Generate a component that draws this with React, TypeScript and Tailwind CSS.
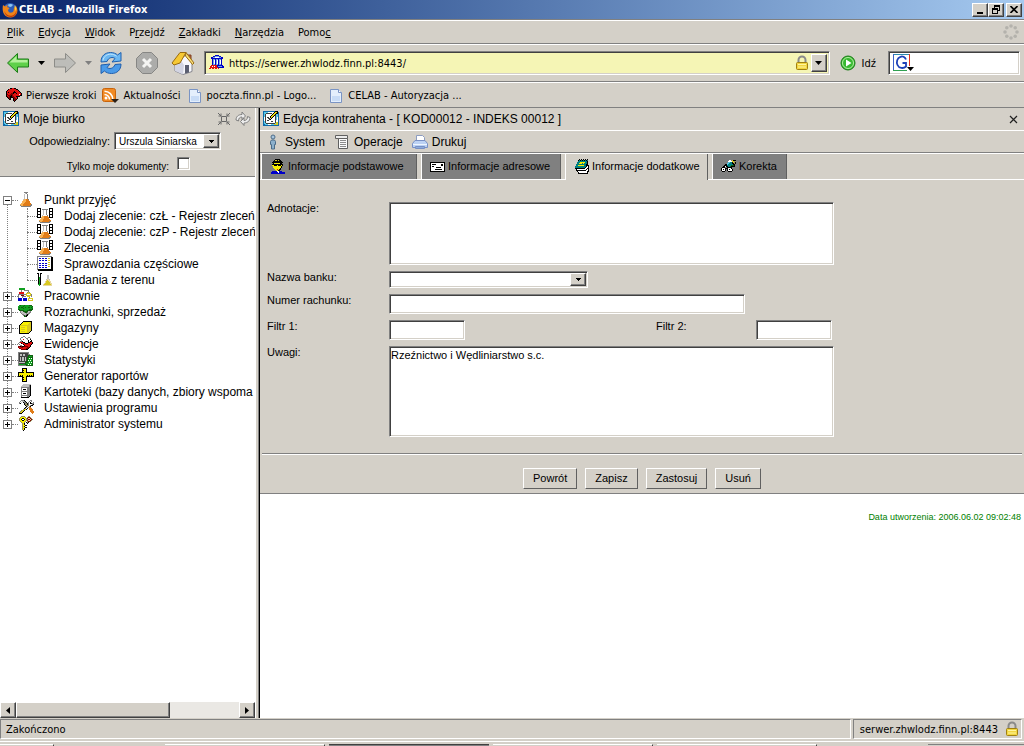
import type { ReactNode } from "react"

const sunken =
  "border border-t-[#808080] border-l-[#808080] border-r-white border-b-white shadow-[inset_1px_1px_0_#404040,inset_-1px_-1px_0_#d4d0c8]"
const raised =
  "border border-t-white border-l-white border-r-[#404040] border-b-[#404040] shadow-[inset_-1px_-1px_0_#808080] bg-[#d4d0c8]"
const bar = "border-t border-t-[#808080] shadow-[inset_0_1px_0_#ffffff]"

const palette: Record<string, string> = {
  k: "#000000",
  w: "#ffffff",
  g: "#808080",
  l: "#c0c0c0",
  d: "#404040",
  y: "#f8f000",
  Y: "#d8c820",
  o: "#e07c18",
  O: "#f8b050",
  r: "#e01010",
  R: "#800000",
  b: "#0000c8",
  B: "#70a8e0",
  c: "#58c8e8",
  C: "#1068a8",
  t: "#008080",
  n: "#10a020",
  N: "#106010",
  s: "#e8d8a0",
  m: "#989060",
}

// 16px icons drawn row by row, one letter per pixel
const icons: Record<string, string[]> = {
  flask: [
    "......gggg......",
    ".......lg.......",
    "......lwwg......",
    "......lwwg......",
    "......lwwg......",
    "......lwwg......",
    "......lwwg......",
    ".....lOOoog.....",
    ".....OOOooo.....",
    "....OOOOoooo....",
    "....OOOooooo....",
    "...OOOooooooo...",
    "..OOOoooooooog..",
    "..gOOooooooogg..",
    "...gggggggggg...",
    "................",
  ],
  flasks: [
    "kkkk........kkkk",
    "kwwk.gggggg.kwwk",
    "kwwk..lwwg..kwwk",
    "kkkk..lwwg..kkkk",
    "kwwk..lwwg..kwwk",
    "kwwk..lwwg..kwwk",
    "kkkk..lwwg..kkkk",
    "kwwk.lwwwwg.kwwk",
    "kwwk.OOoooo.kwwk",
    "kkkkOOOoooookkkk",
    "....OOOooooo....",
    "...OOOooooooo...",
    "..OOOOoooooooo..",
    "..gOOooooooogg..",
    "...gggggggggg...",
    "................",
  ],
  report: [
    "ggggggggggggggg.",
    "gwwwwwwwwwwwwwkk",
    "gwbbwbbwbbwYYwkk",
    "gwwwwwwwwwwwwwkk",
    "gwbbwbbwbbwYYwkk",
    "gwwwwwwwwwwwwwkk",
    "gwwwwwwwwwwYYwkk",
    "gwbbwbbwbbwwwwkk",
    "gwwwwwwwwwwYYwkk",
    "gwbbwbbwbbwwwwkk",
    "gwwwwwwwwwwYYwkk",
    "gwbbwbbwbbwwwwkk",
    "gwwwwwwwwwwwwwkk",
    "gkkkkkkkkkkkkkkk",
    ".kkkkkkkkkkkkkkk",
    "................",
  ],
  tube: [
    "................",
    "kk.kk...........",
    ".kwk............",
    ".kwk......ll....",
    ".kwk......ll....",
    ".knk......ll....",
    ".knk......ll....",
    ".knk.....lssl...",
    ".knk.....sYss...",
    ".knk....sYYYss..",
    ".knk....sYYYYs..",
    ".knk...sYYYYYss.",
    ".nnk..sYYYYYYYs.",
    "..n...sssssssss.",
    "................",
    "................",
  ],
  labs: [
    ".nnnnnn.........",
    ".nnnnnn.........",
    "...g..ggggg.....",
    "...g......g.....",
    ".rrrrr...gYg....",
    ".rrrrr..YYYYY...",
    "ggggggggYwwwYg..",
    "g..RRR..YYYYYg..",
    "g...gggg.YYY.g..",
    "g...g......g....",
    "bbbb.bbbb.YYYYY.",
    "bbbb.bbbb.YwwwY.",
    "bbbb.bbbb.YYYYY.",
    "................",
    "................",
    "................",
  ],
  money: [
    "................",
    ".nNnnnNnnnnNNN..",
    "nnnnnNnnnnnnnnN.",
    "nNnNNnnNnnNNnNn.",
    "nnnnnNnnnnnnnnN.",
    "NNnnnnnnnnnNNNN.",
    ".NNNNNnnnNNNNN..",
    "..gllNNNNNllg...",
    "..glllgNNglgg...",
    "...gllllglgg....",
    "....ggllgkg.....",
    ".....gNgkk......",
    "......NNk.......",
    "................",
    "................",
    "................",
  ],
  box: [
    "................",
    ".....kkkkkkkkk..",
    "....kyyyyyyyYk..",
    "...kyyyyyyyYYk..",
    "..kyyyyyyyYYYk..",
    ".kYYYYYYYYYYYk..",
    ".kyyyyyyyYYYYk..",
    ".kyYYYYyyYYYYk..",
    ".kyyyyyyyYYYYk..",
    ".kyYYYYyyYYYYk..",
    ".kyyyyyyyYYYYk..",
    ".kyYYYYyyYYYk...",
    ".kyyyyyyyYYk....",
    ".kkkkkkkkkk.....",
    "................",
    "................",
  ],
  records: [
    ".....gg.........",
    "...ggwwg..gg....",
    "..gwwwwwggwwg...",
    "..gwwrwwwgwwk...",
    "...gwwwwwwkwwk..",
    "..ggkwwwwwkwkk..",
    ".grrrkkwwwkkrrk.",
    "gwwkrrrkkkrrrrk.",
    ".gwwwkrrrrrrrk..",
    "..ggwwkrrrrrk...",
    "RRkRkkRRRRrrk...",
    "RrrRRrrrrRRk....",
    ".RRrrrrrRRk.....",
    "...RRRRRkk......",
    "................",
    "................",
  ],
  stats: [
    "ggggggggggg.....",
    "gdddddddddg.....",
    "gdlldlldddgg....",
    "gdlldlldddNNNNN.",
    "gdddddddddNnnnN.",
    "gdldlldldNNNNNN.",
    "gdldlldldNnwnwN.",
    "gdldlldldNnnnnN.",
    "gdldlldldNwnwnN.",
    "gdddddddNNnnnnN.",
    "gllllllNNNnwnwN.",
    "gddddddNnnnnnnN.",
    "gnnnnnnNNnwnwnN.",
    "ggggggggNNNNNNN.",
    "................",
    "................",
  ],
  ruler: [
    "....kkkkk.......",
    "....kyyyk.......",
    "....kkyyk.......",
    "....kyyyk.......",
    "kkkkkkyykkkkkkkk",
    "kyyyyyyyyyyyyyyk",
    "kyyyyyyyyyyyyyyk",
    "kykykyyyykykykyk",
    "kkkkkyyykkkkkkkk",
    "....kkyyk.......",
    "....kyyyk.......",
    "....kkyyk.......",
    "....kyyyk.......",
    "....kkkkk.......",
    "................",
    "................",
  ],
  cabinet: [
    ".....llllllll...",
    "....lllllllgk...",
    "...llllllllgk...",
    "...gggggggggk...",
    "...gwwwwwgggk...",
    "...gwkkkwgggk...",
    "...gwwwwwgggk...",
    "...gggggggggk...",
    "...gwwwwwgggk...",
    "...gwkkkwgggk...",
    "...gwwwwwgggk...",
    "...gggggggggk...",
    "...gwwwwwggk....",
    "...kkkkkkkk.....",
    "................",
    "................",
  ],
  tools: [
    "...gggk.....gg..",
    "..gwllgk...gwg..",
    ".gwl.kggk.gwk..g",
    ".gk...kgmkgwkkgg",
    "......kmmkgwwwgk",
    ".......kmmgwgkk.",
    "........kgwmk...",
    ".......kgwgoo...",
    "......kgwk.ooo..",
    ".....gYYk..oooo.",
    "...gYYk.....ooo.",
    "..gYYk......oooo",
    ".gYYk........ooo",
    ".kkk..........o.",
    "................",
    "................",
  ],
  keys: [
    "...mmmm...mm....",
    "..myyyym.mRRm...",
    ".myykkyymRssRm..",
    ".myk..kymmRRsRm.",
    ".myykkyymRssRm..",
    "..myyyym.mRRm...",
    "...myym.kmk.....",
    "....mYk..k......",
    "....myk.........",
    "....myykk.......",
    "....mYk.........",
    "....myykk.......",
    "....mYk.........",
    "....myk.........",
    ".....k..........",
    "................",
  ],
  edit: [
    "CCCCCCCCCCCCkkk.",
    "CccccwwwwwwkyYkC",
    "CccddddddwkyYkkC",
    "CcdwwwwwwkyYkccC",
    "CcdwwwwwkyYkdccC",
    "CcdwwwwkyYkwdccC",
    "CwdwddwkYkwwdcwC",
    "CwdwwddskwwwdcwC",
    "CwdwwwdkwwwwdcwC",
    "CwdwddwwwwwwdwwC",
    "CcdwwwwwddwwdwwC",
    "CcdwwwwwwwwwdYYC",
    "CccdddddddddcYYC",
    "CCcccwwwcccYYYYC",
    "CCCCCCCCCCCCCCCC",
    "................",
  ],
  spy: [
    ".....kkkkk......",
    "....kYYkYkk.....",
    "...kkkkkkkkk....",
    "..kkkkkkkkkkk...",
    "...kyyyyyykk....",
    "..kkkkkkkkkkk...",
    "..yykkkykkkyk...",
    "...yyyyyyyyk....",
    "...yyyyyyyyk....",
    "....yyyyyyk.....",
    ".....yyrykk.....",
    "......yykk......",
    "..bbbbbwwbbb....",
    ".bbbbbbbwbbbbbb.",
    ".bbbbbbbbbbbbbb.",
    "................",
  ],
  card: [
    "................",
    "................",
    "................",
    "kkkkkkkkkkkkkkk.",
    "kwwwwwwwwwwwwwk.",
    "kwkkkkwwwwwkkwk.",
    "kwwwwwwwwwwkkwk.",
    "kwkkwwwwwwwwwwk.",
    "kwwwwwkkkkkwwwk.",
    "kwwwwwwwwwwwwwk.",
    "kwwwwkkkkkkkwwk.",
    "kwwwwwwwwwwwwwk.",
    "kkkkkkkkkkkkkkk.",
    "................",
    "................",
    "................",
  ],
  notebook: [
    ".....k.k.k.k.k..",
    "....ktktktktkt..",
    "....tttttttttk..",
    "...tttyyyyyttk..",
    "...ttyyytytttk..",
    "..ttttttttttkk..",
    "..ttyyyyyyttkkk.",
    ".tttttttttttkwk.",
    ".ttttttttttkwwk.",
    ".kkkkkkkkkkwwkk.",
    "..kwwwwwwwwwkwk.",
    "..kkkkkkkkkkwwk.",
    "...kwwwwwwwwwkk.",
    "....kwwwwwwwwk..",
    "....kkkkkkkkkk..",
    "................",
  ],
  correction: [
    "................",
    "........ww.Ykkk.",
    ".......wwwwYYmm.",
    ".......ccttkYmk.",
    "......cctttkkmk.",
    "....kkctttttkk..",
    "...kkkttttNNNk..",
    "..kkwkkttNkkkk..",
    ".kkk..kkkkk.....",
    "kwwwkkkwwwk.....",
    "kwkwk.kwkwwk....",
    "kwwwk.kwwwwk....",
    ".kkk...kkkk.....",
    "................",
    "................",
    "................",
  ],
  museum: [
    "......bbbb......",
    "....bbBBBBbb....",
    "..bbBBwwwwBBbb..",
    "..bbbbbbbbbbbb..",
    "...bBBbBBbBBb...",
    "...bBwbBwbBwb...",
    "...bBwbBwbBwb...",
    "...bBwbBwbBwb...",
    "...bBwbBwbBwb...",
    "...bBBbBBbBBb...",
    "..rrrrrrbbbbbb..",
    ".rrwrwrrbBBBBbb.",
    ".rrrrrrrrbbbbbb.",
    "rr.rr.rr.r......",
    "................",
    "................",
  ],
  dino: [
    "....kkrrkk......",
    "..krrrrrrrkk....",
    ".krrrrrrrrrrk...",
    "krrrrrrrkrrrrk..",
    "krkrrrrkkkrrrrk.",
    "krrrrRRkrrkrrrrk",
    "kRrrRRRrrrrrrwrk",
    "krRRRkRrrrrrrrkk",
    "kRrRkkRRrrkkkk..",
    ".kRRkkkRRrrk....",
    "..kRk..kRRrk....",
    "...kk..kRRk.....",
    ".......kRk......",
    "........k.......",
    "................",
    "................",
  ],
}

const PixelIcon = ({ name }: { name: string }) => (
  <svg viewBox="0 0 16 16" className="size-4 shrink-0" shapeRendering="crispEdges" aria-hidden="true">
    {icons[name].map((row, y) =>
      row.split("").map((ch, x) =>
        ch === "." ? null : <rect key={`${x}-${y}`} x={x} y={y} width="1" height="1" fill={palette[ch]} />
      )
    )}
  </svg>
)

const Caret = ({ color = "#000000" }: { color?: string }) => (
  <svg viewBox="0 0 7 4" className="h-1 w-[7px] shrink-0" aria-hidden="true">
    <path d="M0 0h7L3.500 4z" fill={color} />
  </svg>
)

const PageIcon = () => (
  <svg viewBox="0 0 16 16" className="size-4 shrink-0" aria-hidden="true">
    <path d="M2.500 1.500h8l3 3v10h-11z" fill="#e4effc" stroke="#7a94c4" />
    <path d="M10.500 1.500v3h3" fill="#ffffff" stroke="#7a94c4" />
    <path d="M4 8h8v5H4z" fill="#c8dcf6" />
  </svg>
)

const LockIcon = () => (
  <svg viewBox="0 0 14 16" className="h-4 w-3.5 shrink-0" aria-hidden="true">
    <path d="M3.500 8V5a3.500 3.500 0 0 1 7 0v3" fill="none" stroke="#8a8a8a" strokeWidth="2" />
    <rect x="1.500" y="7.500" width="11" height="7" rx="1" fill="#f2d640" stroke="#a08010" />
    <path d="M3 9.500h8M3 12h8" stroke="#fff6a0" />
  </svg>
)

const ArrowIcon = ({ forward = false }: { forward?: boolean }) => (
  <svg viewBox="0 0 24 22" className="h-[22px] w-6 shrink-0" aria-hidden="true">
    {forward ? (
      <path d="M22.500 11L12.500 1.500V7H1.500v8h11v5.500z" fill="#bdbdb9" stroke="#8c8c88" />
    ) : (
      <>
        <path d="M1.500 11L11.500 1.500V7h11v8h-11v5.500z" fill="#5fd04a" stroke="#1d7a18" />
        <path d="M3.500 10.500L10.500 4v4h11v2.500z" fill="#b4f09c" />
      </>
    )}
  </svg>
)

const ReloadIcon = () => (
  <svg viewBox="0 0 24 24" className="size-6 shrink-0" aria-hidden="true">
    <path d="M2 11C2 5 6 1.500 11.500 1.500c3 0 5.500 1 7 2.500L22 1.500V10l-9 1 3-3.500C14 5.800 9.500 6 8 10.500z" fill="#6cb8f2" stroke="#1f5fae" />
    <path d="M22 13c0 6-4 9.500-9.500 9.500-3 0-5.500-1-7-2.500L2 22.500V14l9-1-3 3.500c2 1.700 6.500 1.500 8-3z" fill="#4a9ae8" stroke="#1f5fae" />
    <path d="M4 9.500C4.500 5.500 8 3.200 11.500 3.200c2.500 0 4.500.8 6 2" fill="none" stroke="#c6e6fc" />
  </svg>
)

const StopIcon = () => (
  <svg viewBox="0 0 24 24" className="size-6 shrink-0" aria-hidden="true">
    <path d="M7.500 1.500h9l6 6v9l-6 6h-9l-6-6v-9z" fill="#acacaa" stroke="#868684" />
    <path d="M8 8l8 8M16 8l-8 8" stroke="#f4f4f2" strokeWidth="3" />
  </svg>
)

const HomeIcon = () => (
  <svg viewBox="0 0 24 24" className="size-6 shrink-0" aria-hidden="true">
    <path d="M17 4h3v6h-3z" fill="#b06040" stroke="#804020" />
    <path d="M4 12v8l8 3.500 9-3V12l-6-8z" fill="#f8f8fc" stroke="#84848c" />
    <path d="M4 12l5-4 4 6-1 9.500L4 20z" fill="#d2d4e2" />
    <path d="M14 14h4v7.500l-4 1z" fill="#5a5e70" />
    <path d="M1 12L9 1.500h6L9 12l-6 2z" fill="#f6c834" stroke="#9a6c10" />
    <path d="M15 1.500L23 12l-1.500 1.500L14.500 5z" fill="#fbe07a" stroke="#9a6c10" />
  </svg>
)

const RssIcon = () => (
  <svg viewBox="0 0 17 16" className="h-4 w-[17px] shrink-0" aria-hidden="true">
    <rect x="0.500" y="0.500" width="13" height="13" rx="2" fill="#f08a24" stroke="#c8640c" />
    <circle cx="4" cy="10" r="1.500" fill="#ffffff" />
    <path d="M2.500 6.500a5 5 0 0 1 5 5M2.500 3.200a8.300 8.300 0 0 1 8.300 8.300" fill="none" stroke="#ffffff" strokeWidth="1.600" />
    <path d="M9 11h8l-4 4z" fill="#2a2018" />
  </svg>
)

const FirefoxIcon = () => (
  <svg viewBox="0 0 16 16" className="size-4 shrink-0" aria-hidden="true">
    <circle cx="8" cy="8" r="7" fill="#2c5cb8" />
    <path d="M6 2.500c2-1 4-.5 5 .5L9 5 6.500 4.500z" fill="#8cc4f0" />
    <path d="M1 3l2 1.500c1-1 2-1.500 3-1.500L5 5l2.500 1L6 8c0 2 2 3 3.500 2.500 1.800-.5 2.500-2 2.300-4L14 4c2.500 4 1.500 8-1.500 10.200C9 16.500 4 15.500 2 12 .3 9 .5 6 1 3z" fill="#f08418" />
    <path d="M2.500 9c1 4 5 5.500 8 4.500 2-.7 3.500-2.500 3.800-5 .7 4-2.300 6.500-5.500 6.500C5 15 2.500 12 2.500 9z" fill="#c43c08" />
    <path d="M13 3l1.500 4-1 2-1-4z" fill="#fcd448" />
  </svg>
)

const GoIcon = () => (
  <svg viewBox="0 0 16 16" className="size-4 shrink-0" aria-hidden="true">
    <circle cx="8" cy="8" r="7" fill="#38b830" stroke="#1c7c18" />
    <circle cx="8" cy="8" r="5.500" fill="none" stroke="#b4f0a4" />
    <path d="M6 4.500v7L11.500 8z" fill="#ffffff" />
  </svg>
)

const ThrobberIcon = () => (
  <svg viewBox="0 0 16 16" className="size-4 shrink-0" fill="#b4b2ac" aria-hidden="true">
    <circle cx="8" cy="2" r="1.800" />
    <circle cx="12.200" cy="3.800" r="1.800" />
    <circle cx="14" cy="8" r="1.800" />
    <circle cx="12.200" cy="12.200" r="1.800" />
    <circle cx="8" cy="14" r="1.800" />
    <circle cx="3.800" cy="12.200" r="1.800" />
    <circle cx="2" cy="8" r="1.800" />
    <circle cx="3.800" cy="3.800" r="1.800" />
  </svg>
)

const PersonIcon = () => (
  <svg viewBox="0 0 16 16" className="size-4 shrink-0" aria-hidden="true">
    <circle cx="8" cy="3" r="2" fill="#a8c4dc" stroke="#4c6c88" />
    <path d="M5.500 7.500l1-1.500h3l1 1.500v3h-1v4.500h-3v-4.500h-1z" fill="#8cb0cc" stroke="#4c6c88" />
  </svg>
)

const ScrollIcon = () => (
  <svg viewBox="0 0 16 16" className="size-4 shrink-0" aria-hidden="true">
    <path d="M1.500 1.500h12v3h-12z" fill="#ececec" stroke="#606060" />
    <path d="M4.500 4.500h9v10h-9z" fill="#fbfbfb" stroke="#606060" />
    <path d="M6 6.500h6M6 8.500h6M6 10.500h6M6 12.500h6" stroke="#8c8c8c" />
  </svg>
)

const PrinterIcon = () => (
  <svg viewBox="0 0 16 16" className="size-4 shrink-0" aria-hidden="true">
    <path d="M4.500 8V1.500h6l2 2V8" fill="#ffffff" stroke="#8c9cc0" />
    <path d="M3 6.500h10l2.500 3v4h-15v-4z" fill="#bcd2f4" stroke="#7890c4" />
    <path d="M1 10.500h14" stroke="#eef6ff" />
    <path d="M3.500 12.500h9v2h-9z" fill="#8cacdc" stroke="#7890c4" />
  </svg>
)

const ShrinkIcon = () => (
  <svg viewBox="0 0 14 14" className="size-3.5 shrink-0" fill="none" stroke="#686868" aria-hidden="true">
    <path d="M4.500 4.500h5v5h-5zM1 1l3 3M13 1l-3 3M1 13l3-3M13 13l-3-3" />
    <path d="M1.500 4h2.500V1.500M12.500 4H10V1.500M1.500 10h2.500v2.500M12.500 10H10v2.500" />
  </svg>
)

const RefreshIcon = () => (
  <svg viewBox="0 0 16 16" className="size-4 shrink-0" fill="#ececec" stroke="#808080" aria-hidden="true">
    <path d="M1 9c0-3.500 2.500-5.500 6-5.500V1l3.500 4L7 8.500V6C5 6 3.500 7 3.500 10z" />
    <path d="M15 6.500c0 3.500-2.500 5.500-6 5.500v2.500l-3.500-4L9 7v2.500c2 0 3.500-1 3.500-4z" />
  </svg>
)

const SelectArrow = () => (
  <span className={`pointer-events-none absolute inset-y-0.5 right-0.5 flex w-4 items-center justify-center ${raised}`}>
    <svg viewBox="0 0 5 3" className="h-[3px] w-[5px]" shapeRendering="crispEdges" aria-hidden="true">
      <path d="M0 0h5v1H0zM1 1h3v1H1zM2 2h1v1H2z" />
    </svg>
  </span>
)

const menu: ReactNode[] = [
  <><u>P</u>lik</>,
  <><u>E</u>dycja</>,
  <><u>W</u>idok</>,
  <>P<u>r</u>zejdź</>,
  <><u>Z</u>akładki</>,
  <><u>N</u>arzędzia</>,
  <>Pomo<u>c</u></>,
]

const samples = [
  { icon: "flasks", label: "Dodaj zlecenie: czŁ - Rejestr zleceń" },
  { icon: "flasks", label: "Dodaj zlecenie: czP - Rejestr zleceń" },
  { icon: "flasks", label: "Zlecenia" },
  { icon: "report", label: "Sprawozdania częściowe" },
  { icon: "tube", label: "Badania z terenu" },
]

const sections = [
  { icon: "flask", label: "Punkt przyjęć", children: samples },
  { icon: "labs", label: "Pracownie" },
  { icon: "money", label: "Rozrachunki, sprzedaż" },
  { icon: "box", label: "Magazyny" },
  { icon: "records", label: "Ewidencje" },
  { icon: "stats", label: "Statystyki" },
  { icon: "ruler", label: "Generator raportów" },
  { icon: "cabinet", label: "Kartoteki (bazy danych, zbiory wspoma" },
  { icon: "tools", label: "Ustawienia programu" },
  { icon: "keys", label: "Administrator systemu" },
]

const tabs = [
  { icon: "spy", label: "Informacje podstawowe", width: "w-[156px]" },
  { icon: "card", label: "Informacje adresowe", width: "w-[140px]" },
  { icon: "notebook", label: "Informacje dodatkowe", width: "w-[143px]", active: true },
  { icon: "correction", label: "Korekta", width: "w-[75px]" },
]

const BrowserChrome = () => (
  <header className="text-[11px]">
    <div className="flex h-[19px] items-center justify-between bg-linear-to-r from-[#0a246a] to-[#a6caf0] pr-0.5 pl-0.5">
      <div className="flex items-center gap-px font-bold text-white">
        <FirefoxIcon />
        <span className="pt-0.5">CELAB - Mozilla Firefox</span>
      </div>
      <div className="flex">
        <button aria-label="Minimalizuj" className={`flex h-3.5 w-4 items-end justify-center pb-0.5 ${raised}`}>
          <span className="h-0.5 w-1.5 bg-black"></span>
        </button>
        <button aria-label="Przywróć" className={`mr-0.5 flex h-3.5 w-4 items-center justify-center ${raised}`}>
          <svg viewBox="0 0 9 9" className="size-[9px]" shapeRendering="crispEdges" aria-hidden="true">
            <path d="M2 0h6v6H6V5h1V2H3v1H2zM0 3h6v6H0zM1 5v3h4V5z" fillRule="evenodd" />
          </svg>
        </button>
        <button aria-label="Zamknij" className={`flex h-3.5 w-4 items-center justify-center ${raised}`}>
          <svg viewBox="0 0 8 7" className="h-[7px] w-2" aria-hidden="true">
            <path d="M0.500 0l7 7M7.500 0l-7 7" stroke="#000000" strokeWidth="1.600" />
          </svg>
        </button>
      </div>
    </div>

    <nav className={`flex h-6 items-center gap-3.5 pr-[5px] pl-[7px] ${bar}`}>
      {menu.map((item, i) => (
        <button key={i} className="pt-[3px]">{item}</button>
      ))}
      <span className="ml-auto"><ThrobberIcon /></span>
    </nav>

    <div className={`flex h-[38px] items-center pr-1 pl-1.5 ${bar}`}>
      <button aria-label="Wstecz" className="flex items-center gap-2">
        <ArrowIcon />
        <Caret />
      </button>
      <button aria-label="Dalej" className="ml-2 flex items-center gap-2">
        <ArrowIcon forward />
        <Caret color="#808080" />
      </button>
      <button aria-label="Odśwież" className="ml-[7px]"><ReloadIcon /></button>
      <button aria-label="Zatrzymaj" className="ml-3"><StopIcon /></button>
      <button aria-label="Strona startowa" className="ml-3"><HomeIcon /></button>

      <div className={`ml-[9px] flex h-6 flex-1 items-center bg-[#f5f5b5] p-0.5 pl-1 ${sunken}`}>
        <PixelIcon name="museum" />
        <input aria-label="Adres" defaultValue="https://serwer.zhwlodz.finn.pl:8443/" className="min-w-0 flex-1 bg-transparent px-1 pt-[3px] outline-none" />
        <LockIcon />
        <button aria-label="Historia adresów" className={`ml-0.5 flex h-full w-4 items-center justify-center ${raised}`}>
          <Caret />
        </button>
      </div>
      <button className="mr-3 ml-2.5 flex items-center gap-1.5">
        <GoIcon />
        <span className="pt-[3px]">Idź</span>
      </button>
      <div className={`flex h-6 w-[132px] items-center bg-white pl-1 ${sunken}`}>
        <svg viewBox="0 0 22 18" className="h-[18px] w-[22px] shrink-0" aria-hidden="true">
          <path d="M0.500 0.500h16" stroke="#2c8cb0" />
          <path d="M0.500 0v16" stroke="#3c60c8" />
          <path d="M0 16.500h14" stroke="#30a050" />
          <path d="M16.500 0v12" stroke="#e03020" />
          <path d="M13 5.500C12 3 9.500 2 7.500 2.800 4 4 3.200 8 4.500 11c1.500 3.500 6 3.800 8.500 1.500V9H9.500" fill="none" stroke="#1c40b8" strokeWidth="1.800" />
          <path d="M14 13h7l-3.500 4z" />
        </svg>
        <input aria-label="Szukaj" className="min-w-0 flex-1 bg-transparent outline-none" />
      </div>
    </div>

    <div className={`flex h-[26px] items-center pt-0.5 pl-1.5 ${bar}`}>
      <a href="#kroki" className="flex items-center gap-1"><PixelIcon name="dino" /><span className="pt-0.5">Pierwsze kroki</span></a>
      <a href="#rss" className="ml-1.5 flex items-center gap-1"><RssIcon /><span className="pt-0.5">Aktualności</span></a>
      <a href="#poczta" className="ml-1.5 flex items-center gap-1"><PageIcon /><span className="pt-0.5">poczta.finn.pl - Logo...</span></a>
      <a href="#celab" className="ml-3 flex items-center gap-1"><PageIcon /><span className="pt-0.5">CELAB - Autoryzacja ...</span></a>
    </div>
  </header>
)

const Expander = ({ open }: { open: boolean }) => (
  <button aria-label={open ? "Zwiń" : "Rozwiń"} className="relative size-[9px] shrink-0 border border-[#808080] bg-white">
    <span className="absolute top-[3px] left-px h-px w-[5px] bg-black"></span>
    {!open && <span className="absolute top-px left-[3px] h-[5px] w-px bg-black"></span>}
  </button>
)

const Sidebar = () => (
  <aside className="flex w-[255px] shrink-0 flex-col overflow-hidden bg-white">
    <div className="h-[69px] border-b border-[#808080] bg-[#d4d0c8]">
      <div className="flex h-[22px] items-center gap-1 pr-1 pl-[3px]">
        <PixelIcon name="edit" />
        <h2 className="flex-1 text-[12px]">Moje biurko</h2>
        <button aria-label="Zwiń drzewo"><ShrinkIcon /></button>
        <button aria-label="Odśwież drzewo"><RefreshIcon /></button>
      </div>
      <div className="flex h-[22px] items-center justify-end gap-1 pr-[34px]">
        <label htmlFor="owner" className="text-[11px]">Odpowiedzialny:</label>
        <div className="relative">
          <select id="owner" className={`block h-[18px] w-[107px] appearance-none bg-white pl-1 text-[10px] ${sunken}`}>
            <option>Urszula Siniarska</option>
          </select>
          <SelectArrow />
        </div>
      </div>
      <div className="flex h-[22px] items-center justify-end gap-2 pr-[65px]">
        <label htmlFor="mine" className="pt-1.5 text-[10px]">Tylko moje dokumenty:</label>
        <input id="mine" type="checkbox" className={`size-[13px] appearance-none bg-white ${sunken}`} />
      </div>
    </div>

    <div className="flex-1 overflow-hidden pt-[15px] text-[12px] leading-4 whitespace-nowrap">
      <ul className="relative">
        <li aria-hidden="true" className="absolute top-2 bottom-2 left-[7px] border-l border-dotted border-[#808080]"></li>
        {sections.map((section) => (
          <li key={section.label} className="relative">
            <div className="flex h-4 items-center pl-[3px]">
              <Expander open={Boolean(section.children)} />
              <span className="w-1.5 border-t border-dotted border-[#808080]"></span>
              <PixelIcon name={section.icon} />
              <span className="pl-2.5">{section.label}</span>
            </div>
            {section.children && (
              <ul className="relative ml-[27px]">
                <li aria-hidden="true" className="absolute top-0 bottom-2 left-0 border-l border-dotted border-[#808080]"></li>
                {section.children.map((child) => (
                  <li key={child.label} className="flex h-4 items-center">
                    <span className="w-2.5 shrink-0 border-t border-dotted border-[#808080]"></span>
                    <PixelIcon name={child.icon} />
                    <span className="pl-[11px]">{child.label}</span>
                  </li>
                ))}
              </ul>
            )}
          </li>
        ))}
      </ul>
    </div>

    <div className="flex h-4 bg-[#eae8e4]">
      <button aria-label="W lewo" className={`flex w-4 items-center justify-center ${raised}`}>
        <svg viewBox="0 0 4 7" className="h-[7px] w-1" aria-hidden="true"><path d="M4 0v7L0 3.500z" /></svg>
      </button>
      <div className={`w-[154px] ${raised}`}></div>
      <button aria-label="W prawo" className={`ml-auto flex w-4 items-center justify-center ${raised}`}>
        <svg viewBox="0 0 4 7" className="h-[7px] w-1" aria-hidden="true"><path d="M0 0v7l4-3.500z" /></svg>
      </button>
    </div>
  </aside>
)

const Row = ({ id, label, children }: { id: string; label: string; children: ReactNode }) => (
  <div className="flex items-start">
    <label htmlFor={id} className="w-[122px] shrink-0 leading-3">{label}</label>
    {children}
  </div>
)

const ContractorForm = () => (
  <form className="border-b border-[#808080] text-[11px]">
    <div className="flex flex-col gap-1.5 px-[7px] pt-[22px] pb-4">
      <Row id="notes" label="Adnotacje:">
        <textarea id="notes" className={`block h-[63px] w-[445px] resize-none bg-white p-0.5 ${sunken}`} />
      </Row>
      <Row id="bank" label="Nazwa banku:">
        <div className="relative">
          <select id="bank" className={`block h-[17px] w-[199px] appearance-none bg-white ${sunken}`}></select>
          <SelectArrow />
        </div>
      </Row>
      <Row id="account" label="Numer rachunku:">
        <input id="account" className={`h-5 w-[356px] bg-white px-0.5 ${sunken}`} />
      </Row>
      <Row id="filter1" label="Filtr 1:">
        <input id="filter1" className={`h-5 w-[76px] bg-white px-0.5 ${sunken}`} />
        <label htmlFor="filter2" className="ml-[191px] w-[100px] leading-3">Filtr 2:</label>
        <input id="filter2" className={`h-5 w-[76px] bg-white px-0.5 ${sunken}`} />
      </Row>
      <Row id="remarks" label="Uwagi:">
        <textarea
          id="remarks"
          defaultValue="Rzeźnictwo i Wędliniarstwo s.c."
          className={`block h-[91px] w-[445px] resize-none bg-white px-px py-0.5 leading-3 ${sunken}`}
        />
      </Row>
    </div>
    <div className="mx-0.5 border-t border-t-[#808080] shadow-[inset_0_1px_0_#ffffff]">
      <div className="flex h-[39px] justify-center gap-2 pt-3.5">
        {["Powrót", "Zapisz", "Zastosuj", "Usuń"].map((label) => (
          <button
            key={label}
            type="button"
            className="h-[21px] border border-t-white border-r-[#606060] border-b-[#606060] border-l-white px-[9px]"
          >
            {label}
          </button>
        ))}
      </div>
    </div>
  </form>
)

const Workspace = () => (
  <main className="flex min-w-0 flex-1 flex-col bg-white">
    <div className="bg-[#d4d0c8]">
      <div className="flex h-[23px] items-center gap-1 border-b border-white pr-1.5 pl-[3px]">
        <PixelIcon name="edit" />
        <h1 className="flex-1 text-[12px]">Edycja kontrahenta - [ KOD00012 - INDEKS 00012 ]</h1>
        <button aria-label="Zamknij kartę">
          <svg viewBox="0 0 9 9" className="size-[9px]" aria-hidden="true">
            <path d="M1 1l7 7M8 1L1 8" stroke="#202020" strokeWidth="1.200" />
          </svg>
        </button>
      </div>
      <div className="flex h-[22px] items-center gap-[9px] border-b border-[#808080] pl-[5px] text-[12px]">
        <button className="flex items-center gap-1"><PersonIcon />System</button>
        <button className="flex items-center gap-1"><ScrollIcon />Operacje</button>
        <button className="flex items-center gap-1"><PrinterIcon />Drukuj</button>
      </div>
      <div role="tablist" className="flex h-[27px] gap-1 border-t border-white pl-px text-[11px] shadow-[inset_0_-1px_0_#ffffff]">
        {tabs.map((tab) => (
          <button
            key={tab.label}
            role="tab"
            aria-selected={Boolean(tab.active)}
            className={`flex items-center gap-0.5 border-r border-l border-r-[#606060] border-l-white pl-2 whitespace-nowrap ${tab.width} ${
              tab.active ? "bg-[#d4d0c8] pb-px" : "mb-px bg-[#808080]"
            }`}
          >
            <PixelIcon name={tab.icon} />
            {tab.label}
          </button>
        ))}
      </div>
      <ContractorForm />
    </div>
    <p className="pt-[17px] pr-[3px] text-right text-[9px] text-[#008000]">Data utworzenia: 2006.06.02 09:02:48</p>
  </main>
)

const StatusBar = () => (
  <footer className="text-[11px]">
    <div className="flex h-6 gap-0.5 border-b border-white pt-px pr-0.5 pb-0.5">
      <div className="flex flex-1 items-center border border-t-[#808080] border-r-white border-b-white border-l-[#808080] pt-[3px] pl-[5px]">Zakończono</div>
      <div className="flex items-center gap-[7px] border border-t-[#808080] border-r-white border-b-white border-l-[#808080] pr-0.5 pl-1.5">
        <span className="pt-[3px]">serwer.zhwlodz.finn.pl:8443</span>
        <LockIcon />
      </div>
    </div>
    {/* top edge of the system taskbar */}
    <div className="flex h-1 items-end gap-1">
      <div className="h-0.5 w-[54px] border-t border-r border-t-white border-r-[#404040]"></div>
      <div className="ml-[107px] h-0.5 w-40 border-t border-r border-t-white border-r-[#404040]"></div>
      <div className="h-0.5 w-40 border-t border-t-[#404040] bg-[#808080]"></div>
      <div className="h-0.5 w-40 border-t border-r border-t-white border-r-[#404040]"></div>
      <div className="h-0.5 w-40 border-t border-r border-t-white border-r-[#404040]"></div>
      <div className="ml-auto h-0.5 w-24 border-t border-t-[#808080]"></div>
    </div>
  </footer>
)

export default function App() {
  return (
    <div className="flex min-h-screen flex-col bg-[#d4d0c8] font-['DejaVu_Sans_Condensed','DejaVu_Sans',sans-serif] text-black">
      <BrowserChrome />
      <div className="flex flex-1 border-t border-[#808080] font-['Liberation_Sans',Arial,sans-serif]">
        <Sidebar />
        <div className="w-[5px] shrink-0 border-r border-l border-l-white border-r-black bg-[#d4d0c8] shadow-[inset_-1px_0_0_#808080]"></div>
        <Workspace />
      </div>
      <StatusBar />
    </div>
  )
}
